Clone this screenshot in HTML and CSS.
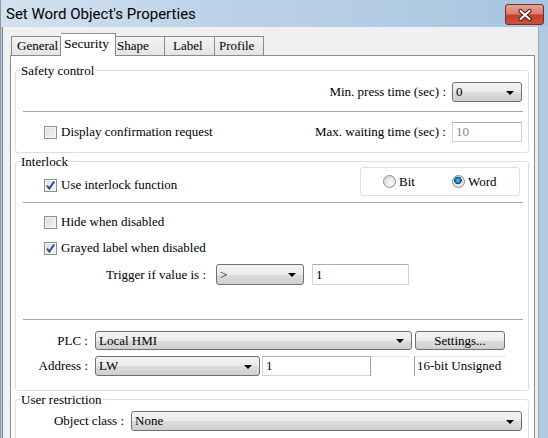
FILE: index.html
```html
<!DOCTYPE html>
<html lang="en">
<head>
    <meta charset="UTF-8">
    <title>Set Word Object's Properties</title>
    <link rel="stylesheet" href="styles.css">
</head>
<body>
    <div class="window">
        <div class="titlebar">
            <span class="title">Set Word Object's Properties</span>
            <span class="close">
                <svg width="14" height="12" viewBox="0 0 14 12">
                    <path d="M2.5 2 L11.5 10 M11.5 2 L2.5 10" stroke="#4a1a14" stroke-width="4.2" stroke-linecap="round"/>
                    <path d="M2.5 2 L11.5 10 M11.5 2 L2.5 10" stroke="#fff" stroke-width="2.2" stroke-linecap="round"/>
                </svg>
            </span>
        </div>

        <div class="client">
            <!-- tab strip -->
            <div class="tabs">
                <span class="tab t-general">General</span>
                <span class="tab t-security active">Security</span>
                <span class="tab t-shape">Shape</span>
                <span class="tab t-label">Label</span>
                <span class="tab t-profile">Profile</span>
            </div>

            <div class="pane">
                <!-- Safety control -->
                <div class="group safety">
                    <div class="group-title">Safety control</div>
                    <div class="row row-right min-row">
                        <span class="label">Min. press time (sec) :</span>
                        <div class="combo w-small"><span>0</span><i class="arrow"></i></div>
                    </div>
                    <div class="sep"></div>
                    <div class="row row-right max-row">
                        <label class="check"><span class="box"></span>Display confirmation request</label>
                        <span class="label">Max. waiting time (sec) :</span>
                        <div class="edit w-small disabled">10</div>
                    </div>
                </div>

                <!-- Interlock -->
                <div class="group interlock">
                    <div class="group-title">Interlock</div>
                    <div class="row lock-row">
                        <label class="check on"><span class="box"></span>Use interlock function</label>
                        <div class="radio-box">
                            <label class="radio"><span class="dot"></span>Bit</label>
                            <label class="radio on"><span class="dot"></span>Word</label>
                        </div>
                    </div>
                    <div class="sep"></div>
                    <div class="row hide-row">
                        <label class="check"><span class="box"></span>Hide when disabled</label>
                    </div>
                    <div class="row gray-row">
                        <label class="check on"><span class="box"></span>Grayed label when disabled</label>
                    </div>
                    <div class="row trigger-row">
                        <span class="label trigger-label">Trigger if value is :</span>
                        <div class="combo w-trigger"><span>&gt;</span><i class="arrow"></i></div>
                        <div class="edit w-value">1</div>
                    </div>
                    <div class="sep sep-plc"></div>
                    <div class="row plc-row">
                        <span class="label addr-label">PLC :</span>
                        <div class="combo w-plc"><span>Local HMI</span><i class="arrow"></i></div>
                        <div class="button">Settings...</div>
                    </div>
                    <div class="row addr-row">
                        <span class="label addr-label">Address :</span>
                        <div class="combo w-dev"><span>LW</span><i class="arrow"></i></div>
                        <div class="edit w-addr">1</div>
                        <div class="static w-blank"></div>
                        <div class="static w-type">16-bit Unsigned</div>
                    </div>
                </div>

                <!-- User restriction -->
                <div class="group user">
                    <div class="group-title">User restriction</div>
                    <div class="row class-row">
                        <span class="label class-label">Object class :</span>
                        <div class="combo w-fill"><span>None</span><i class="arrow"></i></div>
                    </div>
                </div>
            </div>
        </div>
    </div>
</body>
</html>
```

FILE: styles.css
```css
/* dialog frame */
body {
    margin: 0;
    width: 548px;
    height: 438px;
    overflow: hidden;
    font-family: "Liberation Serif", "Times New Roman", Tinos, "DejaVu Serif", serif;
    font-size: 13px;
    color: #000;
}

.window {
    height: 438px;
    display: flex;
    flex-direction: column;
    background: linear-gradient(90deg, #bccfe4, #c9d9ea 60%, #b4c9e0);
    border-left: 1px solid #8d98a4;
    box-sizing: border-box;
}

.titlebar {
    height: 27px;
    flex: none;
    display: flex;
    align-items: flex-start;
    justify-content: space-between;
    background: linear-gradient(90deg, #d3e1ef 0%, #bcd2e9 40%, #a9c4e0 100%);
}

.title {
    font-family: Roboto, "Liberation Sans", sans-serif;
    font-size: 15px;
    line-height: 29px;
    padding-left: 5px;
    color: #000;
}

.close {
    width: 37px;
    height: 19px;
    margin: 4px 4px 0 0;
    border: 1px solid #6e3029;
    border-radius: 3px;
    background: linear-gradient(#e4a194 0%, #d8806f 45%, #c2402c 55%, #c9523b 100%);
    display: flex;
    align-items: center;
    justify-content: center;
}

.client {
    flex: 1;
    margin: 0 9px 0 1px;
    padding: 6px 3px 0 7px;
    background: #f0f0f0;
    border-left: 1px solid #7b7f84;
    border-right: 1px solid #98abbf;
    display: flex;
    flex-direction: column;
}

/* tabs */
.tabs {
    display: flex;
    align-items: flex-end;
    height: 22px;
    padding-left: 1px;
}

.tab {
    box-sizing: border-box;
    height: 19px;
    line-height: 18px;
    padding-left: 5px;
    border: 1px solid #898c95;
    border-bottom: none;
    border-left: none;
    background: linear-gradient(#f4f4f4, #e4e4e4);
}

.t-general { width: 50px; border-left: 1px solid #898c95; }
.t-security { width: 55px; }
.t-shape { width: 49px; padding-left: 1px; }
.t-label { width: 50px; padding-left: 8px; }
.t-profile { width: 49px; padding-left: 4px; }

.tab.active {
    height: 23px;
    margin-bottom: -1px;
    line-height: 19px;
    background: #fff;
    position: relative;
    padding-left: 3px;
    font-size: 13.5px;
}

.pane {
    flex: 1;
    border: 1px solid #898c95;
    background: #fff;
    padding: 0 5px 0 4px;
}

/* group boxes */
.group {
    border: 1px solid #dcdfe2;
    border-radius: 3px;
    background: #fff;
}

.group-title {
    width: fit-content;
    margin: -8px 0 0 5px;
    padding: 0 1px 0 0;
    line-height: 15px;
    background: #fff;
}

.safety { margin-top: 14px; padding: 0 6px 10px 0; }
.interlock { margin-top: 8px; padding: 0 0 14px 0; }
.user { margin-top: 8px; padding: 0 6px 12px 0; }

.sep {
    height: 1px;
    margin: 0 5px 0 7px;
    background: #a6a6a6;
}

.row {
    display: flex;
    align-items: center;
}

.row-right { justify-content: flex-end; }

.min-row { margin-top: 4px; height: 20px; }
.safety .sep { margin-top: 9px; margin-right: -1px; }
.max-row { margin-top: 10px; height: 20px; }
.max-row .check { margin-right: auto; }

.lock-row { margin-top: -2px; height: 29px; align-items: flex-start; }
.lock-row .check { margin-top: 10px; margin-right: auto; }
.interlock .sep { margin-top: 6px; }
.hide-row { margin-top: 11px; height: 16px; }
.gray-row { margin-top: 10px; height: 16px; }
.trigger-row { margin-top: 8px; height: 21px; }
.interlock .sep-plc { margin-top: 34px; }
.plc-row { margin-top: 11px; height: 19px; }
.addr-row { margin-top: 6px; height: 20px; }
.class-row { margin-top: 4px; height: 20px; }

.label { white-space: nowrap; }
.row-right .label { margin-right: 6px; }

.trigger-label { width: 190px; text-align: right; margin-right: 10px; }
.addr-label { width: 72px; text-align: right; margin-right: 7px; }
.class-label { width: 108px; text-align: right; margin-right: 7px; }

/* check boxes and radios */
.check {
    display: flex;
    align-items: center;
    margin-left: 28px;
    height: 16px;
    white-space: nowrap;
}

.box {
    width: 13px;
    height: 13px;
    box-sizing: border-box;
    margin-right: 4px;
    border: 1px solid #8e8f8f;
    background: linear-gradient(135deg, #dcdcdc, #f6f6f6);
    box-shadow: inset 0 0 0 1px #f4f4f4;
}

.check.on .box {
    background:
        url("data:image/svg+xml;utf8,<svg xmlns='http://www.w3.org/2000/svg' width='11' height='11'><path d='M2 5.5 L4.3 8.5 L9.2 1.5' fill='none' stroke='%23294f9c' stroke-width='2'/></svg>") center no-repeat,
        linear-gradient(135deg, #dcdcdc, #f6f6f6);
}

.radio-box {
    box-sizing: border-box;
    width: 160px;
    height: 29px;
    margin-right: 8px;
    border: 1px solid #dcdfe2;
    border-radius: 3px;
    display: flex;
    align-items: center;
    padding-left: 22px;
}

.radio {
    display: flex;
    align-items: center;
}

.radio + .radio { margin-left: 37px; }

.dot {
    width: 13px;
    height: 13px;
    box-sizing: border-box;
    margin-right: 3px;
    border-radius: 50%;
    border: 1px solid #8b8b8b;
    background: radial-gradient(circle at 60% 65%, #fafafa, #d4d4d4);
}

.radio.on .dot {
    background: radial-gradient(circle at 45% 40%, #7fd1f4 0, #1b87c1 2px, #0d4a77 3.6px, #dde3e8 4px, #f4f4f4 100%);
}

/* fields */
.combo, .edit, .button, .static {
    box-sizing: border-box;
    height: 100%;
    white-space: nowrap;
}

.combo {
    display: flex;
    align-items: center;
    justify-content: space-between;
    padding: 0 7px 0 3px;
    border: 1px solid #707070;
    border-radius: 3px;
    background: linear-gradient(#f3f3f3 0%, #ebebeb 50%, #dddddd 52%, #cfcfcf 100%);
}

.arrow {
    width: 0;
    height: 0;
    border-left: 4px solid transparent;
    border-right: 4px solid transparent;
    border-top: 4px solid #000;
    margin-top: 1px;
}

.edit {
    display: flex;
    align-items: center;
    padding-left: 3px;
    border: 1px solid #cfd3d8;
    border-top-color: #abadb3;
    background: #fff;
}

.edit.disabled { color: #8a8a8a; }

.button {
    display: flex;
    align-items: center;
    justify-content: center;
    margin-left: 3px;
    width: 90px;
    border: 1px solid #707070;
    border-radius: 3px;
    background: linear-gradient(#f3f3f3 0%, #ebebeb 50%, #dddddd 52%, #cfcfcf 100%);
}

.static {
    padding-left: 2px;
    line-height: 17px;
    border-left: 1px solid #a0a0a0;
    border-top: 1px solid #e3e3e3;
}

.w-small { width: 70px; }
.w-trigger { width: 88px; }
.w-value { width: 97px; margin-left: 8px; }
.w-plc { width: 317px; }
.w-dev { width: 165px; }
.w-addr { width: 108px; margin-left: 2px; border-right: none; }
.w-blank { width: 40px; }
.w-type { width: 92px; margin-left: 4px; }
.w-fill { flex: 1; }
```
